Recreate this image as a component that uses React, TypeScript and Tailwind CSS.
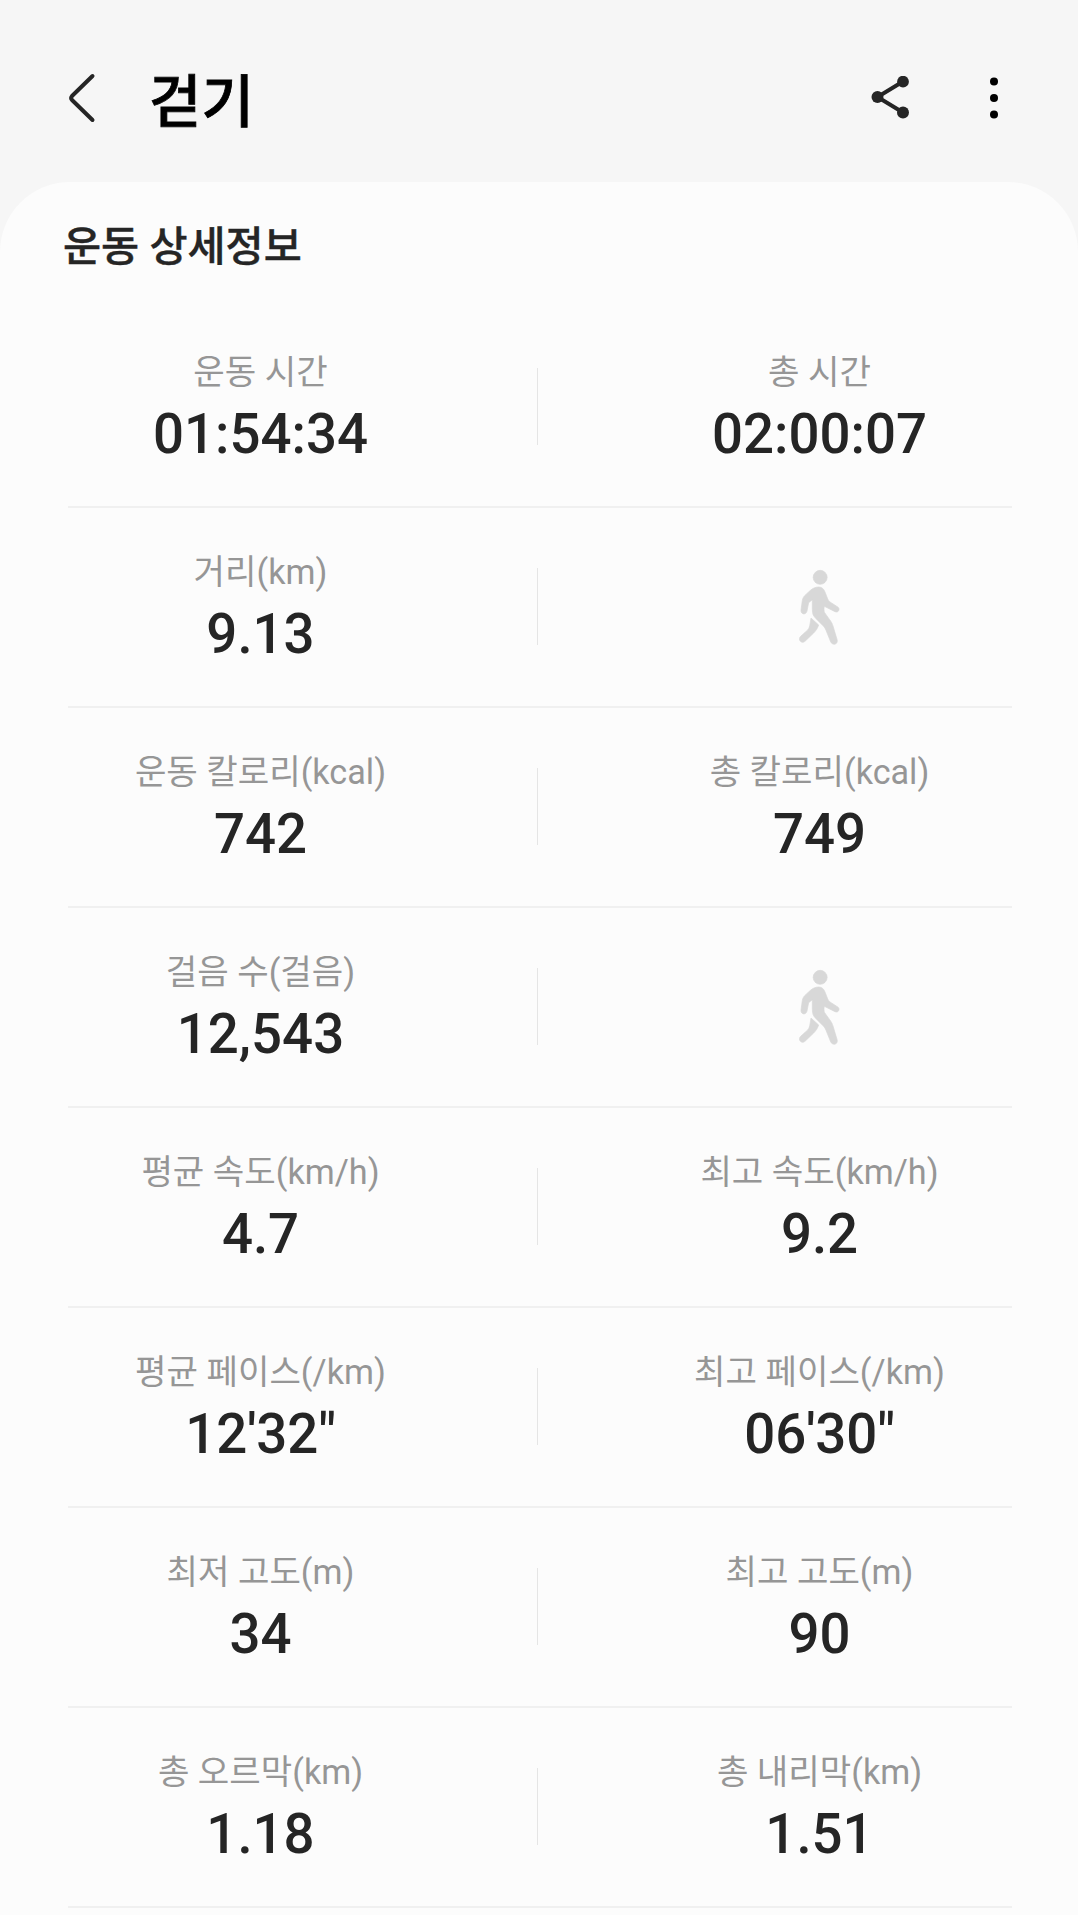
import React from 'react';

function Walker() {
  return (
    <svg className="mt-[60px] h-[78px] w-[44px]" viewBox="114 84 132 234" fill="#d8d8d8" stroke="#d8d8d8" strokeWidth="2">
      <circle cx="180.5" cy="112" r="21" />
      <path d="M176 141C166 141 158 145 150 152L134 167C130 171 128 176 127 181L123 210C122 224 138 226 141 213L146 188L157 179L157 208C157 222 160 228 168 236L190 258C194 262 196 266 198 271L211 303C216 319 236 314 231 298L219 258C217 251 214 245 209 239L194 218C192 214 191 208 193 199L225 215C236 220 242 205 232 200L210 186C206 183 204 179 202 174L195 156C191 146 185 141 176 141Z" />
      <path d="M153 234L176 255C172 266 168 272 161 279L136 303C125 314 112 299 122 289L143 270C148 264 149 258 150 252Z" />
    </svg>
  );
}

type Stat = { label: string; value: string };

const rows: [Stat, Stat | null][] = [
  [{ label: '운동 시간', value: '01:54:34' }, { label: '총 시간', value: '02:00:07' }],
  [{ label: '거리(km)', value: '9.13' }, null],
  [{ label: '운동 칼로리(kcal)', value: '742' }, { label: '총 칼로리(kcal)', value: '749' }],
  [{ label: '걸음 수(걸음)', value: '12,543' }, null],
  [{ label: '평균 속도(km/h)', value: '4.7' }, { label: '최고 속도(km/h)', value: '9.2' }],
  [{ label: '평균 페이스(/km)', value: '12\'32"' }, { label: '최고 페이스(/km)', value: '06\'30"' }],
  [{ label: '최저 고도(m)', value: '34' }, { label: '최고 고도(m)', value: '90' }],
  [{ label: '총 오르막(km)', value: '1.18' }, { label: '총 내리막(km)', value: '1.51' }],
];

function Cell({ stat }: { stat: Stat | null }) {
  return (
    <div className="flex w-[385px] flex-col items-center whitespace-nowrap">
      {stat ? (
        <>
          <div className="mt-[39px] h-[50px] text-[34.2px] leading-[50px] text-[#969696]">{stat.label}</div>
          <div className="mt-[2px] h-[70px] text-[54.6px] leading-[70px] font-medium text-[#252525]">{stat.value}</div>
        </>
      ) : (
        <Walker />
      )}
    </div>
  );
}

export default function App() {
  return (
    <div className="flex h-[1915px] w-[1078px] flex-col overflow-hidden bg-[#f6f6f6] font-[Roboto,'Noto_Sans_CJK_KR',sans-serif]">
      <header className="flex h-[182px] shrink-0 items-center pt-[14px]">
        <svg className="ml-[64px] h-[52px] w-[34px]" viewBox="0 0 34 52" fill="none" stroke="#252525" strokeWidth="4" strokeLinecap="round" strokeLinejoin="round">
          <path d="M28.5 4L8 24Q6.3 26 8 28L28.5 48" />
        </svg>
        <h1 className="mt-[10px] ml-[51px] text-[57px] leading-[70px] font-medium text-black [-webkit-text-stroke:0.8px_#000]">걷기</h1>
        <svg className="ml-auto h-[44px] w-[40px]" viewBox="0 0 40 44" fill="#252525" stroke="#252525">
          <path d="M33 5.5L7.5 21L33 36.5" fill="none" strokeWidth="4" />
          <g stroke="none">
            <circle cx="33" cy="5.7" r="5.9" />
            <circle cx="7.5" cy="21" r="6" />
            <circle cx="33" cy="36.5" r="6" />
          </g>
        </svg>
        <svg className="mr-[78px] ml-[78px] h-[44px] w-[12px]" viewBox="0 0 12 44" fill="#000">
          <circle cx="6" cy="5.5" r="4" />
          <circle cx="6" cy="22" r="4" />
          <circle cx="6" cy="38.5" r="4" />
        </svg>
      </header>
      <main className="grow rounded-t-[70px] bg-[#fcfcfc]">
        <h2 className="h-[126px] pt-[35px] pl-[63px] text-[41.4px] leading-[60px] font-medium text-[#252525] [-webkit-text-stroke:0.4px_#252525]">운동 상세정보</h2>
        {rows.map((row, i) => (
          <section key={i} className="mr-[66px] ml-[68px] flex h-[200px] justify-between border-b-2 border-[#f0f0f0]">
            <Cell stat={row[0]} />
            <div className="mt-[60px] mr-auto ml-[84px] h-[77px] w-px bg-[#e5e5e5]" />
            <Cell stat={row[1]} />
          </section>
        ))}
      </main>
    </div>
  );
}
